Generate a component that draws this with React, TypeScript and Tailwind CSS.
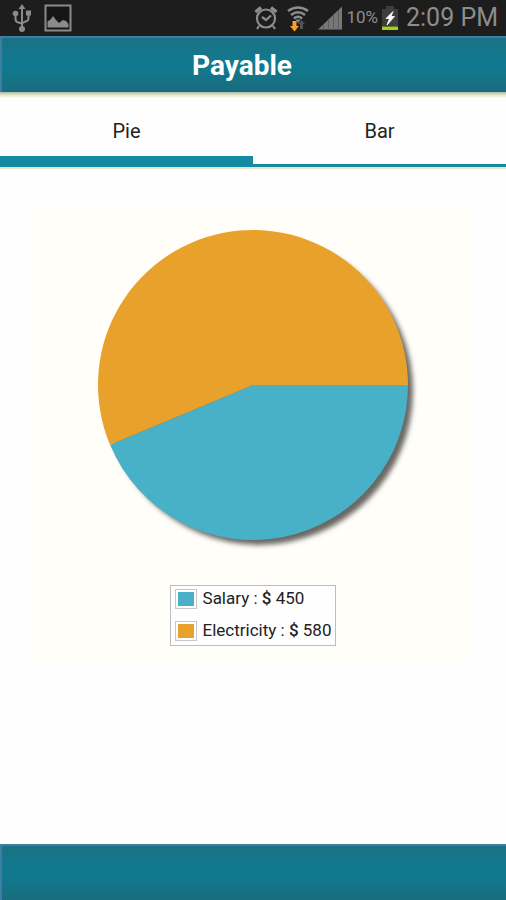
import { useState } from "react";

type Entry = {
  name: string;
  amount: number;
  color: string;
};

type Tab = "pie" | "bar";

const entries: Entry[] = [
  { name: "Salary", amount: 450, color: "#49b1c7" },
  { name: "Electricity", amount: 580, color: "#e8a22b" },
];

const tabs: { id: Tab; label: string }[] = [
  { id: "pie", label: "Pie" },
  { id: "bar", label: "Bar" },
];

const CX = 221;
const CY = 180;
const R = 155;

function UsbIcon() {
  return (
    <svg className="h-7 w-5" viewBox="0 0 20 28" fill="none" stroke="#8b8b8b" strokeWidth="2">
      <path d="M10 4v20M3.5 11v4q0 3 3 3.5L10 19.5M16.500 10v4q0 3-3 3.500L10 19.500" />
      <g fill="#8b8b8b" stroke="none">
        <path d="M10 0l3.500 5h-7z" />
        <circle cx="10" cy="25" r="3" />
        <circle cx="3.500" cy="9.500" r="2.800" />
        <path d="M14 6.500h5v5h-5z" />
      </g>
    </svg>
  );
}

function PictureIcon() {
  return (
    <svg className="size-7" viewBox="0 0 28 28">
      <rect x="1.500" y="1.500" width="25" height="25" fill="#161616" stroke="#8b8b8b" strokeWidth="2" />
      <path d="M3.500 23.500v-6l3-2 2.500-3.500 3 4 3 3 4-3 3 1 2.500 3v3.500z" fill="#8b8b8b" />
    </svg>
  );
}

function AlarmIcon() {
  return (
    <svg className="h-6 w-6" viewBox="0 0 24 24" fill="none" stroke="#8d8d8d" strokeWidth="2.200">
      <circle cx="12" cy="12.500" r="9" />
      <path d="M8 11l4 3 5-4.500M5 20l-2 3M19 20l2 3" />
      <path d="M1.500 6L7 1.500M22.500 6L17 1.500" strokeWidth="3.400" />
    </svg>
  );
}

function WifiIcon() {
  return (
    <svg className="h-7 w-6" viewBox="0 0 24 28" fill="none">
      <path d="M2 7q10-7 20 0M5 11q7-5.500 14 0M8 14.500q4-3.500 8 0" stroke="#8d8d8d" strokeWidth="2.600" />
      <path d="M9.500 15.500h5L12 19z" fill="#8d8d8d" />
      <path d="M6.500 17h4v5H13l-4.500 5.500L4 22h2.500z" fill="#f5a02c" />
      <path d="M14 25v-5h-2l3.500-4 3.500 4h-2v5z" fill="#505050" />
    </svg>
  );
}

function SignalIcon() {
  return (
    <svg className="h-6 w-6" viewBox="0 0 24 24">
      <path d="M0 23.500L24 0.500v23z" fill="#777" />
      <path d="M5.500 18v6M10.500 13.500v10.500M15.500 8.500v15.500M20.500 4v20" stroke="#5c5c5c" strokeWidth="1" />
    </svg>
  );
}

function BatteryIcon() {
  return (
    <svg className="h-6 w-4" viewBox="0 0 16 24">
      <path d="M4 0h8v3h4v17H0V3h4z" fill="#3d3d3d" />
      <path d="M11 5.500L4 12.500h3.500L5 19l7.500-8.500H9z" fill="#fff" stroke="#fff" strokeWidth="0.800" />
      <path d="M0 20.500h16V24H0z" fill="#a4d21b" />
    </svg>
  );
}

function StatusBar() {
  return (
    <div className="flex h-9 shrink-0 items-center justify-between bg-[#1d1d1d] pr-2 pl-3 text-[#8d8d8d]">
      <div className="flex items-center gap-3">
        <UsbIcon />
        <PictureIcon />
      </div>
      <div className="flex items-center">
        <div className="flex items-center gap-2">
          <AlarmIcon />
          <WifiIcon />
          <SignalIcon />
        </div>
        <span className="ml-1 text-[17px]">10%</span>
        <span className="ml-1">
          <BatteryIcon />
        </span>
        <span className="ml-2 text-[25px]">2:09 PM</span>
      </div>
    </div>
  );
}

function PieChart() {
  const total = entries.reduce((sum, entry) => sum + entry.amount, 0);
  let angle = 0;
  const slices = entries.map((entry) => {
    const start = angle;
    const sweep = (entry.amount / total) * Math.PI * 2;
    angle += sweep;
    const x1 = CX + R * Math.cos(start);
    const y1 = CY + R * Math.sin(start);
    const x2 = CX + R * Math.cos(angle);
    const y2 = CY + R * Math.sin(angle);
    const large = sweep > Math.PI ? 1 : 0;
    return {
      ...entry,
      d: `M${CX} ${CY}L${x1} ${y1}A${R} ${R} 0 ${large} 1 ${x2} ${y2}Z`,
    };
  });

  return (
    <svg className="w-full" viewBox="0 0 442 364" role="img" aria-label="Payable by category">
      <defs>
        <filter id="pieShadow" x="-10%" y="-10%" width="120%" height="120%">
          <feGaussianBlur stdDeviation="2.5" />
        </filter>
      </defs>
      <circle cx={CX + 6} cy={CY + 6} r={R - 1} fill="#6b6763" filter="url(#pieShadow)" />
      {slices.map((slice) => (
        <path key={slice.name} d={slice.d} fill={slice.color} />
      ))}
    </svg>
  );
}

function BarChart() {
  return (
    <svg className="w-full" viewBox="0 0 442 364" role="img" aria-label="Payable by category">
      {entries.map((entry, i) => (
        <rect
          key={entry.name}
          x={90 + i * 150}
          y={335 - entry.amount / 2}
          width="110"
          height={entry.amount / 2}
          fill={entry.color}
        />
      ))}
      <path d="M60 335h322" stroke="#999" />
    </svg>
  );
}

function Legend() {
  return (
    <ul className="mx-auto mt-4 flex w-fit flex-col gap-2 border border-[#bdbdbd] bg-[#fefefe] px-1 pt-px pb-0.5">
      {entries.map((entry) => (
        <li key={entry.name} className="flex h-6 items-center gap-1.5 text-[17px] text-[#222]">
          <span className="border border-[#c8c8c8] bg-white p-0.5">
            <span className="block h-3.5 w-4" style={{ backgroundColor: entry.color }} />
          </span>
          <span>
            {entry.name} : <span className="font-medium">$</span> {entry.amount}
          </span>
        </li>
      ))}
    </ul>
  );
}

export default function App() {
  const [active, setActive] = useState<Tab>("pie");

  return (
    <div className="flex min-h-screen flex-col bg-[#fefefe] font-[Roboto,sans-serif]">
      <StatusBar />
      <header className="flex h-14 shrink-0 items-center justify-center border-t-2 border-l-2 border-[#3f7da6] bg-linear-to-b from-[#1a7283] via-[#0f7a90] to-[#186d7d] pt-0.5 pr-6">
        <h1 className="text-[28px] font-bold text-white">Payable</h1>
      </header>
      <div className="h-1.5 shrink-0 bg-linear-to-b from-[#aeb8b0] via-[#e6e6c4] to-[#fefefa]" />

      <div role="tablist" className="flex h-[71px] shrink-0 border-b-2 border-[#e6e4cf]">
        {tabs.map((tab) => (
          <button
            key={tab.id}
            type="button"
            role="tab"
            aria-selected={active === tab.id}
            onClick={() => setActive(tab.id)}
            className={
              active === tab.id
                ? "flex-1 border-b-[11px] border-[#148ba3] pt-2 text-xl text-[#222]"
                : "flex-1 border-b-3 border-[#148ba3] text-xl text-[#222]"
            }
          >
            {tab.label}
          </button>
        ))}
      </div>

      <main className="flex-1 px-8 pt-9 pb-8">
        <section className="bg-[#fffef9] pb-4">
          {active === "pie" ? <PieChart /> : <BarChart />}
          <Legend />
        </section>
      </main>

      <footer className="h-14 shrink-0 border-t-2 border-l-2 border-[#3f7da6] bg-linear-to-b from-[#1a7283] via-[#0f7a90] to-[#186d7d]" />
    </div>
  );
}
